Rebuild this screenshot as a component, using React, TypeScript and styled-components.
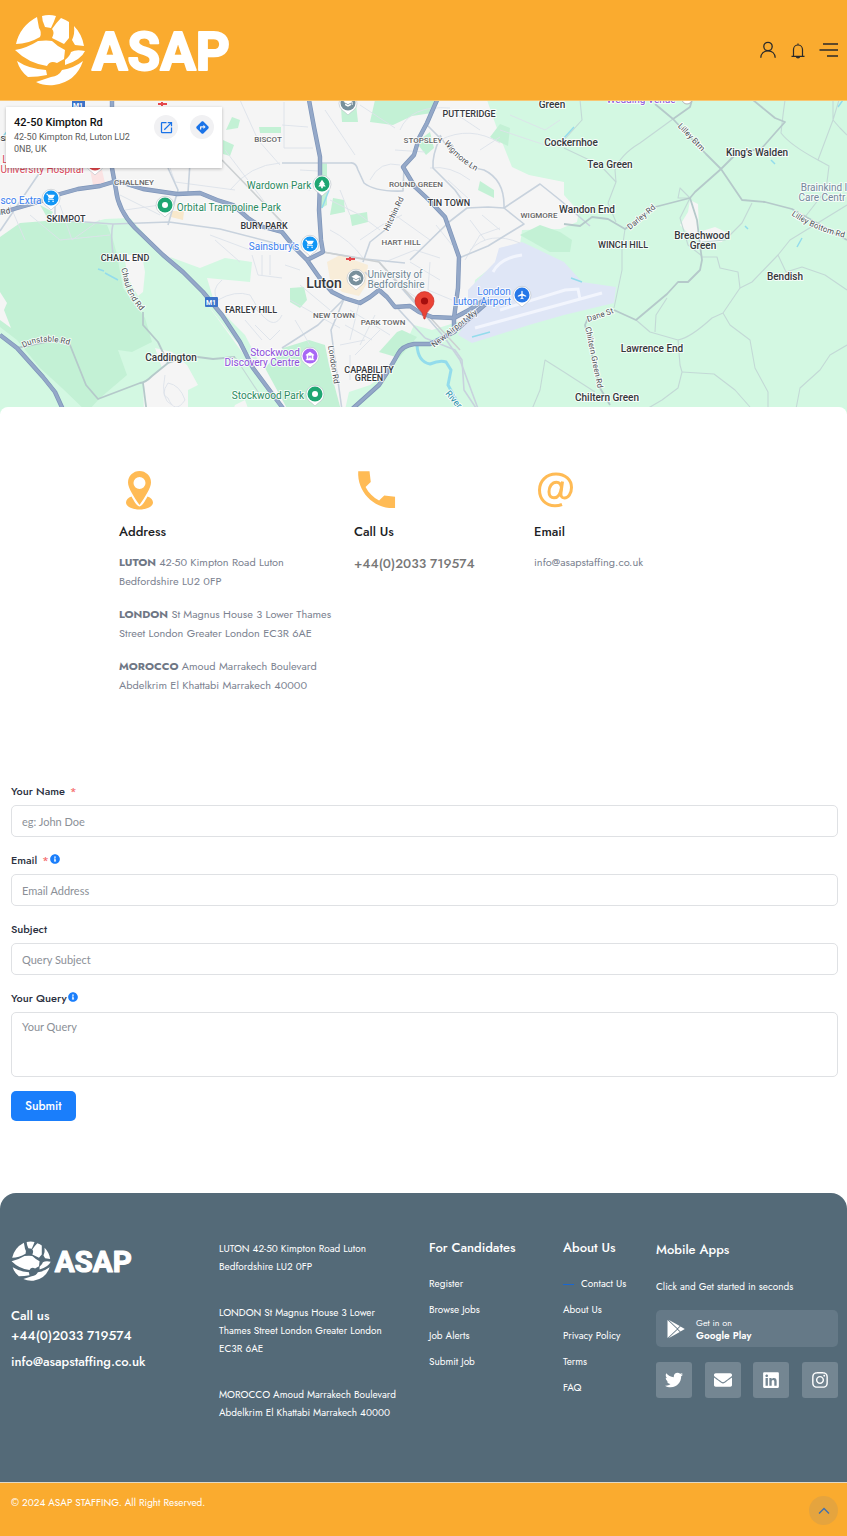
import React from "react";
import styled, { createGlobalStyle } from "styled-components";
import {
  FaTwitter,
  FaEnvelope,
  FaLinkedin,
  FaInstagram,
  FaInfoCircle,
} from "react-icons/fa";
import { MdDirections, MdOpenInNew, MdShoppingCart, MdPark, MdSchool, MdMuseum, MdAirplanemodeActive } from "react-icons/md";

const Global = createGlobalStyle`
  *, *::before, *::after { box-sizing: border-box; }
  body { margin: 0; background: #fff; font-family: Jost, Lato, "Liberation Sans", sans-serif; color: #202124; }
  h2, h3, p, ul { margin: 0; padding: 0; }
  ul { list-style: none; }
  a { color: inherit; text-decoration: none; }
`;

/* ---------- Header ---------- */

const Header = styled.header`
  display: flex;
  align-items: center;
  justify-content: space-between;
  height: 101px;
  padding: 0 9px 0 14px;
  border-bottom: 1px solid #f9c673;
  background: #faab2f;
`;

const LogoLink = styled.a`
  display: block;
  line-height: 0;
`;

const HeaderActions = styled.div`
  display: flex;
  align-items: center;
  gap: 12px;
`;

const IconButton = styled.button`
  display: flex;
  padding: 0;
  border: 0;
  background: none;
  color: #2a2a2a;
  cursor: pointer;
`;

function Logo({ width }: { width: number }) {
  return (
    <svg width={width} height={(width * 72) / 218} viewBox="0 0 218 72" role="img" aria-label="ASAP">
      <g fill="#fff">
        <path d="M28 2Q35 0 42 2Q40 8 37 14L31 13Q28 7 28 2Z" />
        <path d="M23 3L25 14Q28 18 26 23Q14 30 2 30Q6 12 23 3Z" />
        <path d="M47 4Q52 6 55 8V24L50 30L38 24Q41 18 38 15Q42 9 47 4Z" />
        <path d="M60 12Q68 20 70 32L61 31L58 26Q61 20 60 12Z" />
        <path d="M1 36Q13 34 24 27Q33 26 38 27Q44 33 51 36L50 45L43 49Q36 46 33 52Q14 49 1 36Z" />
        <path d="M57 38Q62 35 71 37Q67 46 51 51L51 46Q56 42 57 38Z" />
        <path d="M3 47Q15 55 32 56L33 61Q24 63 14 63Q6 57 3 47Z" />
        <path d="M69 47Q62 68 40 71Q30 72 22 68Q31 65 37 63Q45 62 48 56Q60 54 69 47Z" />
      </g>
      <text
        x="78"
        y="56"
        fill="#fff"
        stroke="#fff"
        strokeWidth="2"
        strokeLinejoin="round"
        fontFamily="Roboto, sans-serif"
        fontWeight="700"
        fontSize="53"
      >
        ASAP
      </text>
    </svg>
  );
}

/* ---------- Map ---------- */

const MapSection = styled.section`
  position: relative;
  height: 313px;
  overflow: hidden;
`;

const MapCanvas = styled.svg`
  display: block;
  width: 100%;
  height: 100%;
`;

const PlaceCard = styled.div`
  position: absolute;
  top: 6px;
  left: 6px;
  display: flex;
  justify-content: space-between;
  width: 216px;
  height: 61px;
  padding: 8px;
  background: #fff;
  box-shadow: 0 1px 3px rgba(0, 0, 0, 0.25);
  font-family: Roboto, sans-serif;
`;

const PlaceName = styled.h2`
  font-size: 11px;
  line-height: 16px;
  font-weight: 500;
  color: #111;
`;

const PlaceAddress = styled.p`
  width: 124px;
  font-size: 9px;
  line-height: 12px;
  color: #5b5b5b;
`;

const PlaceLinks = styled.div`
  display: flex;
  gap: 12px;
`;

const RoundLink = styled.a`
  display: flex;
  align-items: center;
  justify-content: center;
  width: 24px;
  height: 24px;
  border-radius: 50%;
  background: #f1f1f3;
  color: #1a73e8;
`;

const Town = styled.text<{ $size?: number; $color?: string; $weight?: number }>`
  font-family: Roboto, sans-serif;
  font-size: ${(p) => p.$size ?? 10}px;
  font-weight: ${(p) => p.$weight ?? 500};
  fill: ${(p) => p.$color ?? "#35383c"};
  text-anchor: middle;
  paint-order: stroke;
  stroke: #fff;
  stroke-width: 2px;
  stroke-opacity: 0.8;
  stroke-linejoin: round;
`;

const mainRoads = [
  "M112 100L112 168L116 190Q118 210 135 228L163 255L183 272L203 292L222 315L240 342L253 368L282 407L290 418",
  "M0 213L45 200L60 194L78 189L100 186L113 182L120 182L143 189L177 194L200 193L217 200L233 205L248 218L260 226L282 232L295 248L307 260L319 277L332 292L344 298L360 303L370 297L379 290L387 297L395 307L410 306L419 312L432 317L454 318L469 310L484 300",
  "M309 100L314 127L320 157L320 183L319 210L321 240L323 252L307 260",
  "M437 100L427 123L419 138L414 155L403 167L415 187L429 200L445 217L452 237L459 257L458 288L454 318L454 327",
  "M490 300L454 332L430 344H414Q402 346 398 354L390 368L379 385L350 411",
  "M0 335L17 348L43 377L55 392L65 414",
];

const secondRoads = [
  "M282 163H350Q356 162 358 170L364 183Q375 192 403 191L404 167",
  "M427 125L440 138Q432 155 433 168L455 190L462 200",
  "M440 135Q455 165 484 170Q505 180 504 208L488 207L467 208L449 222L410 260",
  "M504 208L524 224L488 246L459 258",
  "M504 208L540 184L560 200L590 226",
  "M400 205L385 230L370 242L363 262",
  "M0 231L55 150M55 205V220M57 220L113 224L169 222L220 229L282 245",
  "M113 224Q110 235 114 262",
  "M323 252L365 259L405 263",
  "M365 272L390 300L425 338",
  "M379 262L425 315L445 338L460 360L480 414",
  "M425 338L455 350L462 360L464 390L480 414",
  "M344 299L331 330L333 345L342 410",
  "M344 299L318 325L282 348",
  "M168 168L178 190L168 225M190 163L188 192",
];

const countryRoads = [
  "M143 312V325L158 342L168 363L152 376Q145 383 140 383L98 399L86 385L70 345L55 340L17 348",
  "M168 363L190 356L213 359L235 357",
  "M143 383L147 414",
  "M655 104L673 119L706 154L721 169L742 200L765 202L792 209L847 240",
  "M692 100L690 107L673 119",
  "M753 100L775 118L785 122L776 132L762 148L735 155L721 169L695 192L690 198L655 207L625 229L608 219L592 217L580 226L564 224",
  "M690 198L697 220L700 245L702 260L700 270L688 282H678L667 294L636 320L614 310",
  "M588 318L585 325L600 388L610 405",
];

const lanes = [
  "M673 119L640 143Q620 155 615 170L616 182L608 203L616 222",
  "M616 182L600 165L564 148M580 100L582 120L564 140",
  "M785 100L783 115L781 133Q790 145 818 160L829 166L826 190L805 217",
  "M833 100V120L840 128L847 135M839 100L833 120L818 160",
  "M752 203L742 223L725 240L702 242",
  "M690 198L680 188L678 198L690 198L680 218L688 245L702 256",
  "M636 320L650 332L678 340L680 365L682 372L678 388L662 400L645 410",
  "M678 340Q690 338 712 318L723 313L740 288L738 272L720 268L717 257H702",
  "M723 313L730 325L750 340L755 368L768 392V414",
  "M740 288L752 282L778 255L786 272L802 267L825 275L847 290",
  "M778 255L790 240L847 205",
  "M682 372L714 374L735 390L750 407",
  "M847 345L830 355L820 370L800 388L795 414",
  "M655 332L656 315L667 298",
  "M625 229L622 250L622 270L614 308",
  "M564 372L595 392M235 357L262 398",
  "M530 414L540 390L545 360L564 372",
];

const localStreets = [
  "M225 150L282 225M230 190Q250 165 280 163M170 168L175 182L235 190M220 212L282 205M240 100L258 140L280 165M10 205L25 240M30 215L60 240L110 235",
  "M282 125L308 127M284 102V148H313M300 170L318 171M282 185L310 190M325 110L355 155M360 105L395 128M400 130Q410 105 450 108M395 150L425 152",
  "M330 230Q350 240 363 258M330 200L360 215L380 230M340 190L350 215M360 240L382 225L402 215M395 215L430 240L440 230M370 180Q380 160 400 165M430 168Q450 165 470 180",
  "M440 140Q470 125 500 143M448 180L470 200M465 260L480 235L500 228M470 220L485 240M482 215L500 230M470 250Q490 230 520 243",
  "M285 265L300 270M290 300L340 328M300 285L330 310M295 320L310 345M345 325L372 340M350 310L390 335M355 355L380 330M360 300L350 340M375 315L360 345M340 345L365 340M350 355L350 380",
  "M222 280Q210 290 218 300Q235 290 250 295L262 315M235 310Q250 300 262 315Q275 330 282 315M255 325L270 340L280 330M245 320L262 340M252 255L258 275L282 278M262 255V275M270 255V275",
  "M410 262L440 280M400 270L430 300M385 262L415 250L440 258M430 262L428 290L452 300M436 225L452 245M405 290L420 300",
  "M168 383Q180 385 185 400Q175 415 168 398Q160 395 168 383M165 375Q160 400 172 405",
  "M210 235L250 250L275 242M215 240L240 262M120 195L160 215M125 210L160 205M60 205L72 240L100 220",
  "M500 130L545 145M510 115L545 130L560 120M480 150L500 137M450 110L480 130",
];

const lightGreen = [
  "M487 100L500 137L512 167L529 175L564 182V195L579 212L577 222L560 229L522 230L520 245L475 280L470 318L432 330L414 325L405 345L390 370L370 385L349 392L344 414H847V100Z",
  "M0 255L90 223L105 219L130 218L150 240L185 275L215 315L255 370L285 414H0Z",
  "M170 257L200 268L225 258L252 262L250 282L207 278L215 305L245 335L262 368L235 340Z",
];

const darkGreen = [
  "M0 237L20 223L57 220L90 223L107 225L113 240L117 255L123 288L145 318L152 342L132 352L118 350L127 375L100 398L87 412L62 388L40 368L17 340L0 327Z",
  "M375 100L370 122L393 125L412 116L432 113L440 100Z",
  "M283 348L309 340L325 345L329 365L342 414H290L265 368Z",
  "M379 352L397 332L402 330L417 337L399 358Z",
  "M422 138L430 132L434 148L426 155L419 146Z",
  "M333 198L344 200L345 212L330 215Z",
  "M480 181L494 190L494 198L478 190Z",
  "M350 215L367 212L368 222L352 226Z",
  "M290 288L304 287L307 300L300 308L290 302Z",
  "M223 140L234 145L230 156L223 154ZM232 117L240 120L238 128L226 130ZM259 127H281V133H260Z",
  "M318 163H327V205L318 210Z",
  "M490 137L500 124L510 128L508 146L495 140Z",
  "M520 235L540 225L560 232L572 240L570 252L550 252Z",
  "M341 108L356 104L358 122L342 122Z",
  "M40 205L53 212L48 219Z",
];

type TownLabel = { x: number; y: number; t: string; size?: number; color?: string; weight?: number };

const towns: TownLabel[] = [
  { x: 552, y: 108, t: "Green" },
  { x: 571, y: 146, t: "Cockernhoe" },
  { x: 610, y: 168, t: "Tea Green" },
  { x: 757, y: 156, t: "King's Walden" },
  { x: 587, y: 213, t: "Wandon End" },
  { x: 702, y: 239, t: "Breachwood" },
  { x: 703, y: 249, t: "Green" },
  { x: 785, y: 280, t: "Bendish" },
  { x: 652, y: 352, t: "Lawrence End" },
  { x: 607, y: 401, t: "Chiltern Green" },
  { x: 171, y: 361, t: "Caddington" },
  { x: 324, y: 288, t: "Luton", size: 14 },
  { x: 469, y: 117, t: "PUTTERIDGE", size: 9 },
  { x: 449, y: 206, t: "TIN TOWN", size: 9 },
  { x: 623, y: 248, t: "WINCH HILL", size: 9 },
  { x: 66, y: 222, t: "SKIMPOT", size: 9 },
  { x: 264, y: 229, t: "BURY PARK", size: 9 },
  { x: 125, y: 261, t: "CHAUL END", size: 9 },
  { x: 251, y: 313, t: "FARLEY HILL", size: 9 },
  { x: 369, y: 373, t: "CAPABILITY", size: 9 },
  { x: 369, y: 381, t: "GREEN", size: 9 },
  { x: 268, y: 142, t: "BISCOT", size: 8, color: "#666" },
  { x: 134, y: 185, t: "CHALLNEY", size: 8, color: "#666" },
  { x: 423, y: 143, t: "STOPSLEY", size: 8, color: "#666" },
  { x: 416, y: 187, t: "ROUND GREEN", size: 8, color: "#666" },
  { x: 539, y: 218, t: "WIGMORE", size: 8, color: "#666" },
  { x: 401, y: 245, t: "HART HILL", size: 8, color: "#666" },
  { x: 334, y: 318, t: "NEW TOWN", size: 8, color: "#666" },
  { x: 383, y: 325, t: "PARK TOWN", size: 8, color: "#666" },
  { x: 279, y: 189, t: "Wardown Park", color: "#2b8a5f", weight: 400 },
  { x: 229, y: 211, t: "Orbital Trampoline Park", color: "#2b8a5f", weight: 400 },
  { x: 268, y: 399, t: "Stockwood Park", color: "#2b8a5f", weight: 400 },
  { x: 274, y: 250, t: "Sainsbury's", color: "#3a7ff0", weight: 400 },
  { x: 21, y: 204, t: "sco Extra", color: "#3a7ff0", weight: 400 },
  { x: 494, y: 295, t: "London", color: "#3a7ff0", weight: 400 },
  { x: 482, y: 305, t: "Luton Airport", color: "#3a7ff0", weight: 400 },
  { x: 395, y: 278, t: "University of", color: "#6f8794", weight: 400 },
  { x: 396, y: 288, t: "Bedfordshire", color: "#6f8794", weight: 400 },
  { x: 275, y: 356, t: "Stockwood", color: "#8d4fdb", weight: 400 },
  { x: 262, y: 366, t: "Discovery Centre", color: "#8d4fdb", weight: 400 },
  { x: 42, y: 173, t: "University Hospital", color: "#d9485a", weight: 400 },
  { x: 5, y: 163, t: "L", color: "#d9485a", weight: 400 },
  { x: 641, y: 103, t: "Wedding Venue", color: "#8d4fdb", weight: 400 },
  { x: 824, y: 191, t: "Brainkind I", color: "#75879c", weight: 400 },
  { x: 822, y: 201, t: "Care Centr", color: "#75879c", weight: 400 },
  { x: 4, y: 141, t: "SI", size: 8 },
];

const streetLabels = [
  { id: "wigmore", d: "M444 143Q456 160 476 171", t: "Wigmore Ln" },
  { id: "hitchin", d: "M388 232L404 198", t: "Hitchin Rd" },
  { id: "lilley", d: "M677 126L702 152", t: "Lilley Btm" },
  { id: "darley", d: "M630 230L656 208", t: "Darley Rd" },
  { id: "bottom", d: "M790 214Q812 230 846 238", t: "Lilley Bottom Rd" },
  { id: "dunstable", d: "M23 348Q42 337 70 345", t: "Dunstable Rd" },
  { id: "chaul", d: "M121 267L125 285Q130 300 142 312", t: "Chaul End Rd" },
  { id: "london", d: "M328 346L334 384", t: "London Rd" },
  { id: "airport", d: "M434 348L478 313", t: "New Airport Wy" },
  { id: "dane", d: "M588 322L614 313", t: "Dane St" },
  { id: "chiltern", d: "M585 326L598 390", t: "Chiltern Green Rd" },
];

function Poi({ x, y, color, children }: { x: number; y: number; color: string; children?: React.ReactNode }) {
  return (
    <g transform={`translate(${x} ${y})`}>
      <path d="M0 12Q-3 9 -6 7A9 9 0 1 1 6 7Q3 9 0 12Z" fill="#fff" stroke="#b9c0c6" strokeWidth="0.6" />
      <circle r="7.5" fill={color} />
      {children ?? <circle r="3" fill="#fff" />}
    </g>
  );
}

function StreetMap() {
  return (
    <MapCanvas viewBox="0 101 847 313" preserveAspectRatio="xMidYMid slice" role="img" aria-label="Map of Luton">
      <rect y="100" width="847" height="314" fill="#f5f5f5" />
      {lightGreen.map((d) => <path key={d} d={d} fill="#d3f8e2" />)}
      {darkGreen.map((d) => <path key={d} d={d} fill="#c3f1d5" />)}
      <g fill="#f5f5f5">
        <path d="M0 292L7 303L4 310L11 328L0 320Z" />
        <path d="M124 255H142L145 272L143 292L138 296L128 278Z" />
        <path d="M155 348L172 352L187 365L198 385L188 390L188 414H144L143 383L162 368Z" />
        <path d="M690 200L698 204L699 232L715 227L728 233L722 242L702 243L690 235L680 225L688 212Z" />
        <path d="M235 405L245 400L250 414H232Z" />
      </g>
      <path d="M495 262L499 248L522 242L539 250L564 262L582 282L616 287L614 303L564 315L529 325L472 343L458 335L468 318V290Z" fill="#dfe6f6" />
      <path d="M493 272Q500 258 522 255M475 328L602 293M500 310L565 290L578 289L580 299" fill="none" stroke="#f2f5fd" strokeWidth="3" />
      <path d="M327 262L340 255L368 265L366 285L359 296L342 292L330 280Z" fill="#f8edd9" />
      <path d="M172 211H184L183 220L171 217Z" fill="#f8e8cb" />
      <path d="M90 170H102L105 183L93 185Z" fill="#fbe3e3" />
      <path d="M417 345Q418 362 430 364Q440 360 446 362L451 370L448 385L460 407" fill="none" stroke="#93dcec" strokeWidth="3" />
      <path d="M322 208L329 190M98 269L104 271M105 273L118 280M10 128L0 140M564 138L574 127M838 107L843 100M771 160L775 164M745 226L748 229M797 247L802 238M472 337L490 332M571 278L582 282" fill="none" stroke="#93dcec" strokeWidth="1.5" />
      <g fill="none" stroke="#dde2ea" strokeWidth="0.9">
        {localStreets.map((d) => <path key={d} d={d} />)}
      </g>
      <g fill="none" stroke="#c8d2dd" strokeWidth="1.6" strokeLinejoin="round">
        {secondRoads.map((d) => <path key={d} d={d} />)}
      </g>
      <g fill="none" stroke="#c3d9d6" strokeWidth="1.1" strokeLinejoin="round">
        {lanes.map((d) => <path key={d} d={d} />)}
      </g>
      <g fill="none" stroke="#b5c9ca" strokeWidth="1.8" strokeLinejoin="round">
        {countryRoads.map((d) => <path key={d} d={d} />)}
      </g>
      <path d="M222 160L282 222M323 252L379 262L460 350" fill="none" stroke="#ccd0d2" strokeWidth="1.6" />
      <g fill="none" stroke="#7e95b9" strokeWidth="4.4" strokeLinejoin="round">
        {mainRoads.map((d) => <path key={d} d={d} />)}
      </g>
      <g fill="none" stroke="#94a8c8" strokeWidth="3" strokeLinejoin="round">
        {mainRoads.map((d) => <path key={d} d={d} />)}
      </g>

      {streetLabels.map((s) => (
        <g key={s.id}>
          <path id={s.id} d={s.d} fill="none" />
          <Town $size={8} $weight={400} $color="#4c4f54">
            <textPath href={`#${s.id}`} startOffset="50%">{s.t}</textPath>
          </Town>
        </g>
      ))}
      {towns.map((l) => (
        <Town key={l.t + l.y} x={l.x} y={l.y} $size={l.size} $color={l.color} $weight={l.weight}>
          {l.t}
        </Town>
      ))}
      <Town $size={8} $weight={400} $color="#4c4f54" x="6" y="214" transform="rotate(-12 6 214)">Rd</Town>
      <Town $size={9} $weight={400} $color="#2b8fa8" x="453" y="402" transform="rotate(50 453 400)">River</Town>

      <g>
        <rect x="205" y="297" width="13" height="10" rx="1" fill="#3b73c9" />
        <text x="211" y="305" textAnchor="middle" fontFamily="Roboto" fontSize="7" fontWeight="700" fill="#fff">M1</text>
        <rect x="72" y="100" width="13" height="10" rx="1" fill="#3b73c9" />
        <text x="78" y="108" textAnchor="middle" fontFamily="Roboto" fontSize="7" fontWeight="700" fill="#fff">M1</text>
      </g>
      <path d="M346 259H355M350 257V261M158 104H167M162 102V106" stroke="#e5484d" strokeWidth="2" />

      <Poi x={322} y={184} color="#1ea672"><MdPark x="-5" y="-5" size={10} color="#fff" /></Poi>
      <Poi x={165} y={205} color="#1ea672" />
      <Poi x={315} y={394} color="#1ea672" />
      <Poi x={51} y={198} color="#1296f5"><MdShoppingCart x="-5" y="-5" size={10} color="#fff" /></Poi>
      <Poi x={310} y={244} color="#1296f5"><MdShoppingCart x="-5" y="-5" size={10} color="#fff" /></Poi>
      <Poi x={356} y={278} color="#78909c"><MdSchool x="-5" y="-5" size={10} color="#fff" /></Poi>
      <Poi x={348} y={103} color="#78909c"><MdSchool x="-5" y="-5" size={10} color="#fff" /></Poi>
      <Poi x={310} y={356} color="#a866f5"><MdMuseum x="-5" y="-5" size={10} color="#fff" /></Poi>
      <Poi x={522} y={295} color="#2678e8"><MdAirplanemodeActive x="-5" y="-5" size={10} color="#fff" /></Poi>
      <Poi x={95} y={163} color="#e5484d" />
      <circle cx="687" cy="99" r="5" fill="#fff" stroke="#b5b5b5" />

      <path d="M424 319Q423 312 418 308A9.500 9.500 0 1 1 431 308Q426 312 425 319Z" fill="#ea4335" stroke="#c5221f" strokeWidth="0.6" />
      <circle cx="424.500" cy="301" r="3.600" fill="#a50e0e" />
    </MapCanvas>
  );
}

/* ---------- Contact details ---------- */

const Panel = styled.main`
  position: relative;
  margin-top: -7px;
  padding: 61px 9px 72px 11px;
  border-radius: 8px 8px 0 0;
  background: #fff;
`;

const ContactGrid = styled.section`
  display: grid;
  grid-template-columns: 235fr 180fr 196fr;
  padding: 0 108px;
`;

const ContactIcon = styled.svg`
  display: block;
  width: 42px;
  height: 42px;
  fill: #ffbb55;
`;

const ContactTitle = styled.h2`
  margin: 12px 0 11px;
  font-size: 13px;
  line-height: 20px;
  font-weight: 500;
`;

const ContactText = styled.p`
  margin-bottom: 14px;
  max-width: 218px;
  font-size: 11px;
  line-height: 19px;
  color: #7b8290;

  strong { font-weight: 700; color: #6f7785; }
`;

const ContactPhone = styled.a`
  display: block;
  font-size: 13px;
  line-height: 22px;
  font-weight: 500;
  color: #777;
`;

/* ---------- Form ---------- */

const Form = styled.form`
  display: flex;
  flex-direction: column;
  align-items: flex-start;
  gap: 14px;
  padding-top: 73px;
`;

const Field = styled.div`
  display: flex;
  flex-direction: column;
  gap: 3px;
  width: 100%;
`;

const Label = styled.label`
  display: flex;
  align-items: center;
  height: 20px;
  padding-bottom: 2px;
  font-size: 11px;
  line-height: 18px;
  font-weight: 500;
  color: #2b3040;

  svg { margin: 0 0 3px 1px; color: #1a7efb; }
`;

const Required = styled.span`
  margin-left: 5px;
  color: #f56c6c;
`;

const controlStyles = `
  display: block;
  width: 100%;
  padding: 5px 10px;
  border: 1px solid #dfe1e4;
  border-radius: 5px;
  background: #fff;
  font-family: Lato, "Open Sans", sans-serif;
  font-size: 11px;
  line-height: 18px;
  color: #444;

  &::placeholder { color: #8b9097; opacity: 1; }
`;

const TextInput = styled.input`
  ${controlStyles}
  height: 32px;
`;

const TextArea = styled.textarea`
  ${controlStyles}
  height: 65px;
  resize: none;
`;

const SubmitButton = styled.button`
  height: 30px;
  padding: 0 14px;
  border: 0;
  border-radius: 5px;
  background: #1a7efb;
  font: 500 12px/20px Jost, Lato, sans-serif;
  color: #fff;
  cursor: pointer;
`;

/* ---------- Footer ---------- */

const FooterWrap = styled.footer`
  background: #fff;
  color: #fff;
`;

const FooterGrid = styled.div`
  display: grid;
  grid-template-columns: 208fr 210fr 134fr 93fr 182fr;
  min-height: 289px;
  padding: 46px 9px 20px 11px;
  border-radius: 16px 16px 0 0;
  background: #546a78;
`;

const FooterColumn = styled.div<{ $top?: number }>`
  min-width: 0;
  padding-top: ${(p) => p.$top ?? 0}px;
`;

const CallBlock = styled.div`
  margin-top: 25px;
  font-size: 13px;
  line-height: 20px;
  font-weight: 500;

  a { display: block; }
  a + a { margin-top: 6px; }
`;

const FooterAddress = styled.p`
  max-width: 182px;
  margin-bottom: 28px;
  font-size: 10px;
  line-height: 18px;
`;

const FooterTitle = styled.h3`
  font-size: 13px;
  line-height: 18px;
  font-weight: 500;
`;

const FooterLinks = styled.ul`
  display: flex;
  flex-direction: column;
  gap: 8px;
  margin-top: 18px;
  font-size: 10px;
  line-height: 18px;
`;

const FooterLink = styled.a<{ $active?: boolean }>`
  display: flex;
  align-items: center;
  gap: 7px;
  white-space: nowrap;

  &::before {
    content: "";
    display: ${(p) => (p.$active ? "block" : "none")};
    width: 11px;
    height: 1px;
    background: #1967d2;
  }
`;

const AppText = styled.p`
  margin-top: 18px;
  font-size: 10px;
  line-height: 20px;
`;

const StoreLink = styled.a`
  display: flex;
  align-items: center;
  gap: 11px;
  height: 37px;
  margin-top: 13px;
  padding: 0 0 0 11px;
  border-radius: 5px;
  background: #657987;
  font-size: 9px;
  line-height: 13px;

  strong { display: block; font-size: 10px; font-weight: 600; }
`;

const SocialRow = styled.div`
  display: flex;
  justify-content: space-between;
  margin-top: 15px;
`;

const SocialLink = styled.a`
  display: flex;
  align-items: center;
  justify-content: center;
  width: 36px;
  height: 36px;
  border-radius: 3px;
  background: #748692;
`;

const BottomBar = styled.div`
  display: flex;
  justify-content: space-between;
  height: 54px;
  padding: 10px 9px 0 11px;
  border-top: 1px solid #e3d9c5;
  background: #faab2f;
  font-size: 10px;
  line-height: 20px;
`;

const TopButton = styled.button`
  display: flex;
  align-items: center;
  justify-content: center;
  width: 29px;
  height: 29px;
  margin-top: 3px;
  padding: 0;
  border: 0;
  border-radius: 50%;
  background: #e5a43e;
  color: #3f6fb0;
  cursor: pointer;
`;

export default function App() {
  return (
    <>
      <Global />
      <Header>
        <LogoLink href="#"><Logo width={218} /></LogoLink>
        <HeaderActions>
          <IconButton aria-label="Account">
            <svg width="18" height="18" viewBox="0 0 18 18" fill="none" stroke="currentColor" strokeWidth="1.3">
              <circle cx="9" cy="5.500" r="4.200" />
              <path d="M1.800 16.800C2 12.500 5 9.800 9 9.800S16 12.500 16.200 16.800" />
            </svg>
          </IconButton>
          <IconButton aria-label="Notifications">
            <svg width="18" height="18" viewBox="0 0 18 18" fill="none" stroke="currentColor" strokeWidth="1.2">
              <path d="M4.500 15V8.500A4.500 4.500 0 0 1 13.500 8.500V15M2.500 15.400H15.500M9 2.500V4" />
              <path d="M7.500 15.800A1.500 1.200 0 0 0 10.500 15.800" fill="currentColor" />
            </svg>
          </IconButton>
          <IconButton aria-label="Menu">
            <svg width="19" height="16" viewBox="0 0 19 16" fill="none" stroke="currentColor" strokeWidth="1.7">
              <path d="M4 2H19M0.500 8H19M8 14H19" />
            </svg>
          </IconButton>
        </HeaderActions>
      </Header>

      <MapSection>
        <StreetMap />
        <PlaceCard>
          <div>
            <PlaceName>42-50 Kimpton Rd</PlaceName>
            <PlaceAddress>42-50 Kimpton Rd, Luton LU2 0NB, UK</PlaceAddress>
          </div>
          <PlaceLinks>
            <RoundLink href="#" aria-label="Open map"><MdOpenInNew size={15} /></RoundLink>
            <RoundLink href="#" aria-label="Directions"><MdDirections size={15} /></RoundLink>
          </PlaceLinks>
        </PlaceCard>
      </MapSection>

      <Panel>
        <ContactGrid>
          <div>
            <ContactIcon viewBox="0 0 42 42">
              <path fillRule="evenodd" d="M20.500 3A11.500 11.500 0 0 0 9 14.500C9 20 15 29 20.500 37C26 29 32 20 32 14.500A11.500 11.500 0 0 0 20.500 3ZM20.500 9A6 6 0 1 1 20.500 21A6 6 0 0 1 20.500 9Z" />
              <path d="M12.500 28.500C9 29.500 7 32 7 34.500C7 38.500 13 41.500 20.500 41.500S34 38.500 34 34.500C34 32 32 29.500 28.500 28.500C26 33 23.500 37.800 20.500 38.500C17.500 37.800 15 33 12.500 28.500Z" />
            </ContactIcon>
            <ContactTitle>Address</ContactTitle>
            <ContactText><strong>LUTON</strong> 42-50 Kimpton Road Luton<br />Bedfordshire LU2 0FP</ContactText>
            <ContactText><strong>LONDON</strong> St Magnus House 3 Lower Thames Street London Greater London EC3R 6AE</ContactText>
            <ContactText><strong>MOROCCO</strong> Amoud Marrakech Boulevard Abdelkrim El Khattabi Marrakech 40000</ContactText>
          </div>
          <div>
            <ContactIcon viewBox="0 0 42 42">
              <path transform="translate(-2 -3) scale(2.050)" d="M21 15.460l-5.270-.610-2.520 2.520c-2.830-1.440-5.150-3.750-6.590-6.590l2.530-2.530L8.540 3H3.030C2.450 13.180 10.820 21.550 21 20.970v-5.510z" />
            </ContactIcon>
            <ContactTitle>Call Us</ContactTitle>
            <ContactPhone href="tel:+442033719574">+44(0)2033 719574</ContactPhone>
          </div>
          <div>
            <ContactIcon viewBox="0 0 42 42">
              <g fill="none" stroke="#ffbb55" strokeWidth="3">
                <path d="M28 36.500C25.500 37.500 23.500 37.800 21 37.800C11.500 37.800 5.500 31 5.500 22C5.500 13 12.500 6 22 6C31.500 6 37.500 12 37.500 19.500C37.500 26 34 30 30.500 30C27.300 30 26.500 27.500 27 24.500L28.500 13.500" />
                <path d="M27.500 19.500C27 16 25 14.200 22.500 14.200C18 14.200 15 18.500 15 23.700C15 27.500 17 29.800 20 29.800C23.500 29.800 26.500 27 27.500 19.500Z" />
              </g>
            </ContactIcon>
            <ContactTitle>Email</ContactTitle>
            <ContactText><a href="mailto:info@asapstaffing.co.uk">info@asapstaffing.co.uk</a></ContactText>
          </div>
        </ContactGrid>

        <Form onSubmit={(e) => e.preventDefault()}>
          <Field>
            <Label htmlFor="name">Your Name <Required>*</Required></Label>
            <TextInput id="name" placeholder="eg: John Doe" />
          </Field>
          <Field>
            <Label htmlFor="email">Email <Required>*</Required><FaInfoCircle size={10} /></Label>
            <TextInput id="email" type="email" placeholder="Email Address" />
          </Field>
          <Field>
            <Label htmlFor="subject">Subject</Label>
            <TextInput id="subject" placeholder="Query Subject" />
          </Field>
          <Field>
            <Label htmlFor="query">Your Query<FaInfoCircle size={10} /></Label>
            <TextArea id="query" placeholder="Your Query" />
          </Field>
          <SubmitButton type="submit">Submit</SubmitButton>
        </Form>
      </Panel>

      <FooterWrap>
        <FooterGrid>
          <FooterColumn $top={2}>
            <LogoLink href="#"><Logo width={122} /></LogoLink>
            <CallBlock>
              Call us
              <a href="tel:+442033719574">+44(0)2033 719574</a>
              <a href="mailto:info@asapstaffing.co.uk">info@asapstaffing.co.uk</a>
            </CallBlock>
          </FooterColumn>
          <FooterColumn $top={1}>
            <FooterAddress>LUTON 42-50 Kimpton Road Luton<br />Bedfordshire LU2 0FP</FooterAddress>
            <FooterAddress>LONDON St Magnus House 3 Lower<br />Thames Street London Greater London<br />EC3R 6AE</FooterAddress>
            <FooterAddress>MOROCCO Amoud Marrakech Boulevard<br />Abdelkrim El Khattabi Marrakech 40000</FooterAddress>
          </FooterColumn>
          <FooterColumn>
            <FooterTitle>For Candidates</FooterTitle>
            <FooterLinks>
              {["Register", "Browse Jobs", "Job Alerts", "Submit Job"].map((t) => (
                <li key={t}><FooterLink href="#">{t}</FooterLink></li>
              ))}
            </FooterLinks>
          </FooterColumn>
          <FooterColumn>
            <FooterTitle>About Us</FooterTitle>
            <FooterLinks>
              {["Contact Us", "About Us", "Privacy Policy", "Terms", "FAQ"].map((t, i) => (
                <li key={t}><FooterLink href="#" $active={i === 0}>{t}</FooterLink></li>
              ))}
            </FooterLinks>
          </FooterColumn>
          <FooterColumn $top={2}>
            <FooterTitle>Mobile Apps</FooterTitle>
            <AppText>Click and Get started in seconds</AppText>
            <StoreLink href="#">
              <svg width="18" height="20" viewBox="0 0 18 20" fill="#fff" aria-hidden="true">
                <path d="M0.500 1L10 10L0.500 19Z" />
                <path d="M1.500 0.800L12.800 7L10.400 9.300ZM1.500 19.200L12.800 13L10.400 10.700ZM13.500 7.400L17.800 10L13.500 12.600L10.900 10Z" />
              </svg>
              <span>Get in on<strong>Google Play</strong></span>
            </StoreLink>
            <SocialRow>
              <SocialLink href="#" aria-label="Twitter"><FaTwitter size={18} /></SocialLink>
              <SocialLink href="#" aria-label="Email"><FaEnvelope size={18} /></SocialLink>
              <SocialLink href="#" aria-label="LinkedIn"><FaLinkedin size={18} /></SocialLink>
              <SocialLink href="#" aria-label="Instagram"><FaInstagram size={18} /></SocialLink>
            </SocialRow>
          </FooterColumn>
        </FooterGrid>
        <BottomBar>
          <span>© 2024 ASAP STAFFING. All Right Reserved.</span>
          <TopButton aria-label="Back to top">
            <svg width="12" height="8" viewBox="0 0 12 8" fill="none" stroke="currentColor" strokeWidth="1.300">
              <path d="M1 6.500L6 1.500L11 6.500" />
            </svg>
          </TopButton>
        </BottomBar>
      </FooterWrap>
    </>
  );
}
